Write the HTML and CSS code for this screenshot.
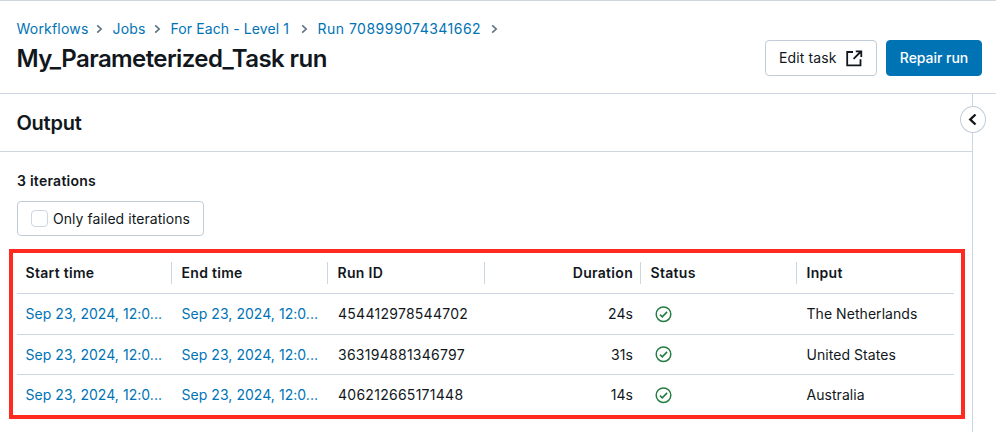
FILE: index.html
```html
<!DOCTYPE html>
<html lang="en">
<head>
<meta charset="utf-8">
<title>My_Parameterized_Task run</title>
<link rel="stylesheet" href="styles.css">
</head>
<body>
<svg class="defs" width="0" height="0">
  <symbol id="chevron" viewBox="0 0 7 10"><path d="M1.2 1.3 5.2 5l-4 3.7" fill="none" stroke="#5f7281" stroke-width="1.6"/></symbol>
  <symbol id="check" viewBox="0 0 17 17"><circle cx="8.5" cy="8.2" r="7.3" fill="none" stroke="#277c43" stroke-width="1.5"/><path d="m5 8.6 2.3 2.2 4.8-4.9" fill="none" stroke="#277c43" stroke-width="1.6"/></symbol>
</svg>
<header class="header">
  <div class="heading">
    <nav class="crumbs">
      <a class="c1">Workflows</a><svg class="chev"><use href="#chevron"/></svg>
      <a class="c2">Jobs</a><svg class="chev"><use href="#chevron"/></svg>
      <a class="c3">For Each - Level 1</a><svg class="chev"><use href="#chevron"/></svg>
      <a class="c4">Run 708999074341662</a><svg class="chev"><use href="#chevron"/></svg>
    </nav>
    <h1><span>My_Parameterized_Task run</span></h1>
  </div>
  <div class="actions">
    <button class="btn edit"><span>Edit task</span>
      <svg width="17" height="17" viewBox="0 0 17 17" fill="none" stroke="#11171c" stroke-width="1.8"><path d="M7 2H1.2v13.4h13.3V9.3M7.6 8.9 14.4 2M9.8 1.4h5.5v5.6"/></svg>
    </button>
    <button class="btn primary"><span>Repair run</span></button>
  </div>
</header>
<div class="body">
  <main class="main">
    <div class="panel-title"><h2>Output</h2></div>
    <section class="content">
      <div class="count"><span>3 iterations</span></div>
      <label class="btn filter"><i class="box"></i><span>Only failed iterations</span></label>
      <div class="highlight">
        <div class="row head">
          <div>Start time</div><div>End time</div><div>Run ID</div><div class="num">Duration</div><div>Status</div><div>Input</div>
        </div>
        <div class="row">
          <div><a>Sep 23, 2024, 12:0...</a></div><div><a>Sep 23, 2024, 12:0...</a></div><div class="id">454412978544702</div><div class="num">24s</div><div><svg class="ok"><use href="#check"/></svg></div><div>The Netherlands</div>
        </div>
        <div class="row short">
          <div><a>Sep 23, 2024, 12:0...</a></div><div><a>Sep 23, 2024, 12:0...</a></div><div class="id">363194881346797</div><div class="num">31s</div><div><svg class="ok"><use href="#check"/></svg></div><div>United States</div>
        </div>
        <div class="row last">
          <div><a>Sep 23, 2024, 12:0...</a></div><div><a>Sep 23, 2024, 12:0...</a></div><div class="id">406212665171448</div><div class="num">14s</div><div><svg class="ok"><use href="#check"/></svg></div><div>Australia</div>
        </div>
      </div>
    </section>
  </main>
  <aside class="side"><button class="toggle"><svg width="9" height="13" viewBox="0 0 9 13"><path d="M7.5 1.5 2.3 6.5l5.2 5" fill="none" stroke="#11171c" stroke-width="2.4"/></svg></button></aside>
</div>
</body>
</html>
```
FILE: styles.css
```css
* { box-sizing: border-box; }
body {
  margin: 0;
  height: 432px;
  overflow: hidden;
  display: flex;
  flex-direction: column;
  background: #fff;
  color: #11171c;
  font: 14px/20px Inter, "Liberation Sans", sans-serif;
  white-space: nowrap;
}
.defs { position: absolute; }
a { color: #0073b5; }
.header {
  height: 94px;
  flex: none;
  display: flex;
  justify-content: space-between;
  padding: 0 14px 0 16.5px;
  border-top: 1px solid #cdd7e2;
  border-bottom: 1px solid #cdd7e2;
}
.crumbs { display: flex; align-items: center; margin-top: 18px; height: 20px; letter-spacing: 0.2px; }
.crumbs a { flex: none; }
.c1 { width: 69px; }
.c2 { width: 31px; }
.c3 { width: 120px; letter-spacing: 0.1px; }
.c4 { width: 163px; letter-spacing: 0.48px; }
.chev { width: 7px; height: 10px; margin: 0 10px; flex: none; }
h1, h2 { margin: 0; font-weight: 600; }
h1 { font-size: 24px; line-height: 32px; margin-top: 4px; letter-spacing: -0.6px; }
.actions { display: flex; gap: 9px; margin-top: 39px; height: 36px; }
.btn {
  display: flex;
  align-items: center;
  font: inherit;
  color: inherit;
  background: #fff;
  border: 1px solid #c0cdd8;
  border-radius: 4px;
  padding: 0 13px;
}
.edit { width: 112px; justify-content: space-between; letter-spacing: 0.12px; }
.primary { width: 96px; background: #0073b5; border-color: #0073b5; color: #fff; justify-content: center; padding: 0; font-weight: 500; letter-spacing: -0.04px; }
.body { flex: 1; display: flex; min-height: 0; }
.main { width: 972px; flex: none; }
.panel-title { height: 58px; border-bottom: 1px solid #cdd7e2; padding: 15px 16.5px; }
h2 { font-size: 20px; line-height: 28px; letter-spacing: -0.25px; }
.content { padding: 19px 7px 0 9px; }
.count { margin-left: 8px; font-weight: 600; letter-spacing: 0.25px; }
.filter { width: 187px; height: 35px; margin: 10px 0 13px 8px; gap: 5px; letter-spacing: 0.06px; }
.box { width: 17px; height: 17px; border: 1px solid #cdd7e2; border-radius: 4px; flex: none; }
.highlight { width: 956px; height: 170px; border: 4px solid #ff2a20; padding: 0 7px 0 4px; }
.row {
  display: grid;
  grid-template-columns: 155px 156px 157px 156px 156px 1fr;
  height: 41px;
  align-items: center;
  border-bottom: 1px solid #cdd7e2;
  letter-spacing: 0.05px;
}
.row > div { padding: 0 8px 0 9.5px; display: flex; align-items: center; }
.row > div:first-child { padding-left: 8.5px; }
.row > .num { justify-content: flex-end; }
.row > .id { letter-spacing: 0.27px; padding-left: 10px; }
.row.head { font-weight: 600; letter-spacing: 0.3px; }
.row.head > div { height: 22px; border-right: 1px solid #cdd7e2; }
.row.head > .num { padding-right: 7px; }
.row.head > div:last-child { border-right: 0; }
.row.short { height: 40px; }
.row.last { border-bottom: 0; height: 40px; }
.ok { width: 17px; height: 17px; margin-left: 4.5px; }
.side { flex: 1; border-left: 1px solid #cdd7e2; }
.toggle {
  width: 26px;
  height: 27px;
  margin: 12px 0 0 -13px;
  padding: 0 2px 0 0;
  display: flex;
  align-items: center;
  justify-content: center;
  background: #fff;
  border: 1px solid #c0cdd8;
  border-radius: 50%;
}
```
